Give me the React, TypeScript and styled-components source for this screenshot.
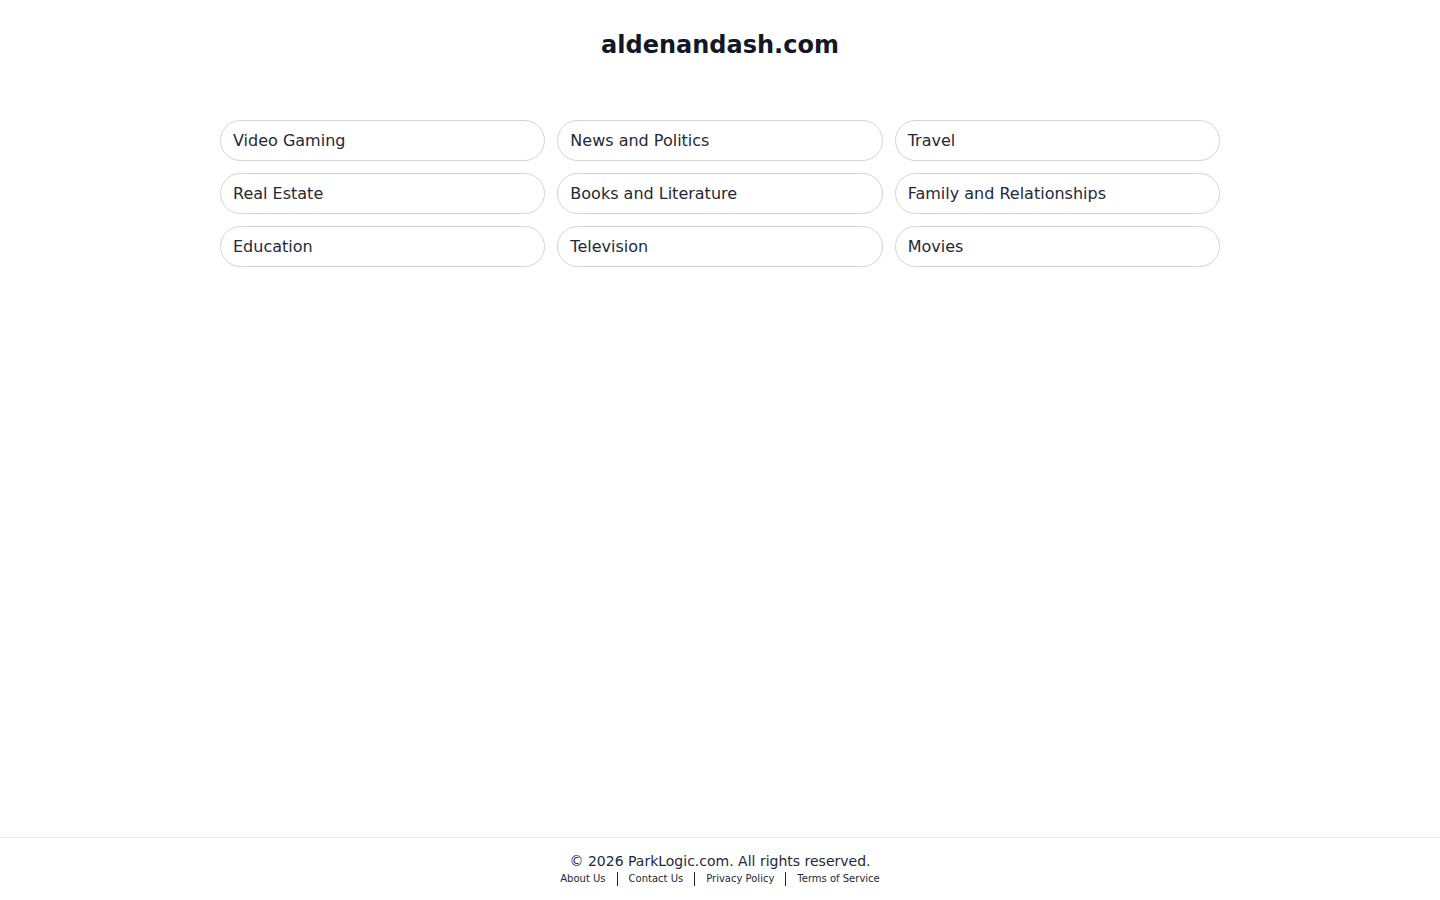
import * as React from 'react';
import styled, { createGlobalStyle } from 'styled-components';

const Global = createGlobalStyle`
  html, body, #root {
    margin: 0;
    height: 100%;
  }
  body {
    font-family: 'DejaVu Sans', 'Liberation Sans', sans-serif;
    background: #ffffff;
    color: #1f2937;
  }
`;

const Page = styled.div`
  display: flex;
  flex-direction: column;
  min-height: 100%;
`;

const Main = styled.main`
  flex: 1;
  display: flex;
  flex-direction: column;
  align-items: center;
  padding-top: 29px;
`;

const Title = styled.h1`
  margin: 0;
  font-size: 24px;
  line-height: 32px;
  font-weight: 700;
  color: #111827;
`;

const Grid = styled.div`
  display: grid;
  grid-template-columns: repeat(3, 1fr);
  gap: 12px;
  width: 1000px;
  margin-top: 59px;
`;

const Pill = styled.a`
  display: flex;
  align-items: center;
  height: 41px;
  box-sizing: border-box;
  padding: 0 12px;
  border: 1px solid #d4d4d8;
  border-radius: 999px;
  font-size: 16px;
  color: #1f2937;
  text-decoration: none;
  cursor: pointer;
`;

const Footer = styled.footer`
  border-top: 1px solid #e5e7eb;
  padding: 13px 0 14px;
  text-align: center;
`;

const Copy = styled.div`
  font-size: 14px;
  line-height: 20px;
  color: #1f2937;
  margin-bottom: 1px;
`;

const Links = styled.nav`
  display: flex;
  justify-content: center;
  align-items: center;
  font-size: 10px;
  line-height: 14px;
`;

const FootLink = styled.a<{ $first?: boolean }>`
  padding: 0 11px;
  color: #1f2937;
  text-decoration: none;
  line-height: 14px;
  border-left: ${(p) => (p.$first ? 'none' : '1px solid #1f2937')};
`;

const topics = [
  'Video Gaming',
  'News and Politics',
  'Travel',
  'Real Estate',
  'Books and Literature',
  'Family and Relationships',
  'Education',
  'Television',
  'Movies',
];

const footerLinks = ['About Us', 'Contact Us', 'Privacy Policy', 'Terms of Service'];

const App = (): JSX.Element => {
  return (
    <Page>
      <Global />
      <Main>
        <Title>aldenandash.com</Title>
        <Grid>
          {topics.map((t) => (
            <Pill key={t}>{t}</Pill>
          ))}
        </Grid>
      </Main>
      <Footer>
        <Copy>© 2026 ParkLogic.com. All rights reserved.</Copy>
        <Links>
          {footerLinks.map((l, i) => (
            <FootLink key={l} $first={i === 0}>
              {l}
            </FootLink>
          ))}
        </Links>
      </Footer>
    </Page>
  );
};

export default App;
